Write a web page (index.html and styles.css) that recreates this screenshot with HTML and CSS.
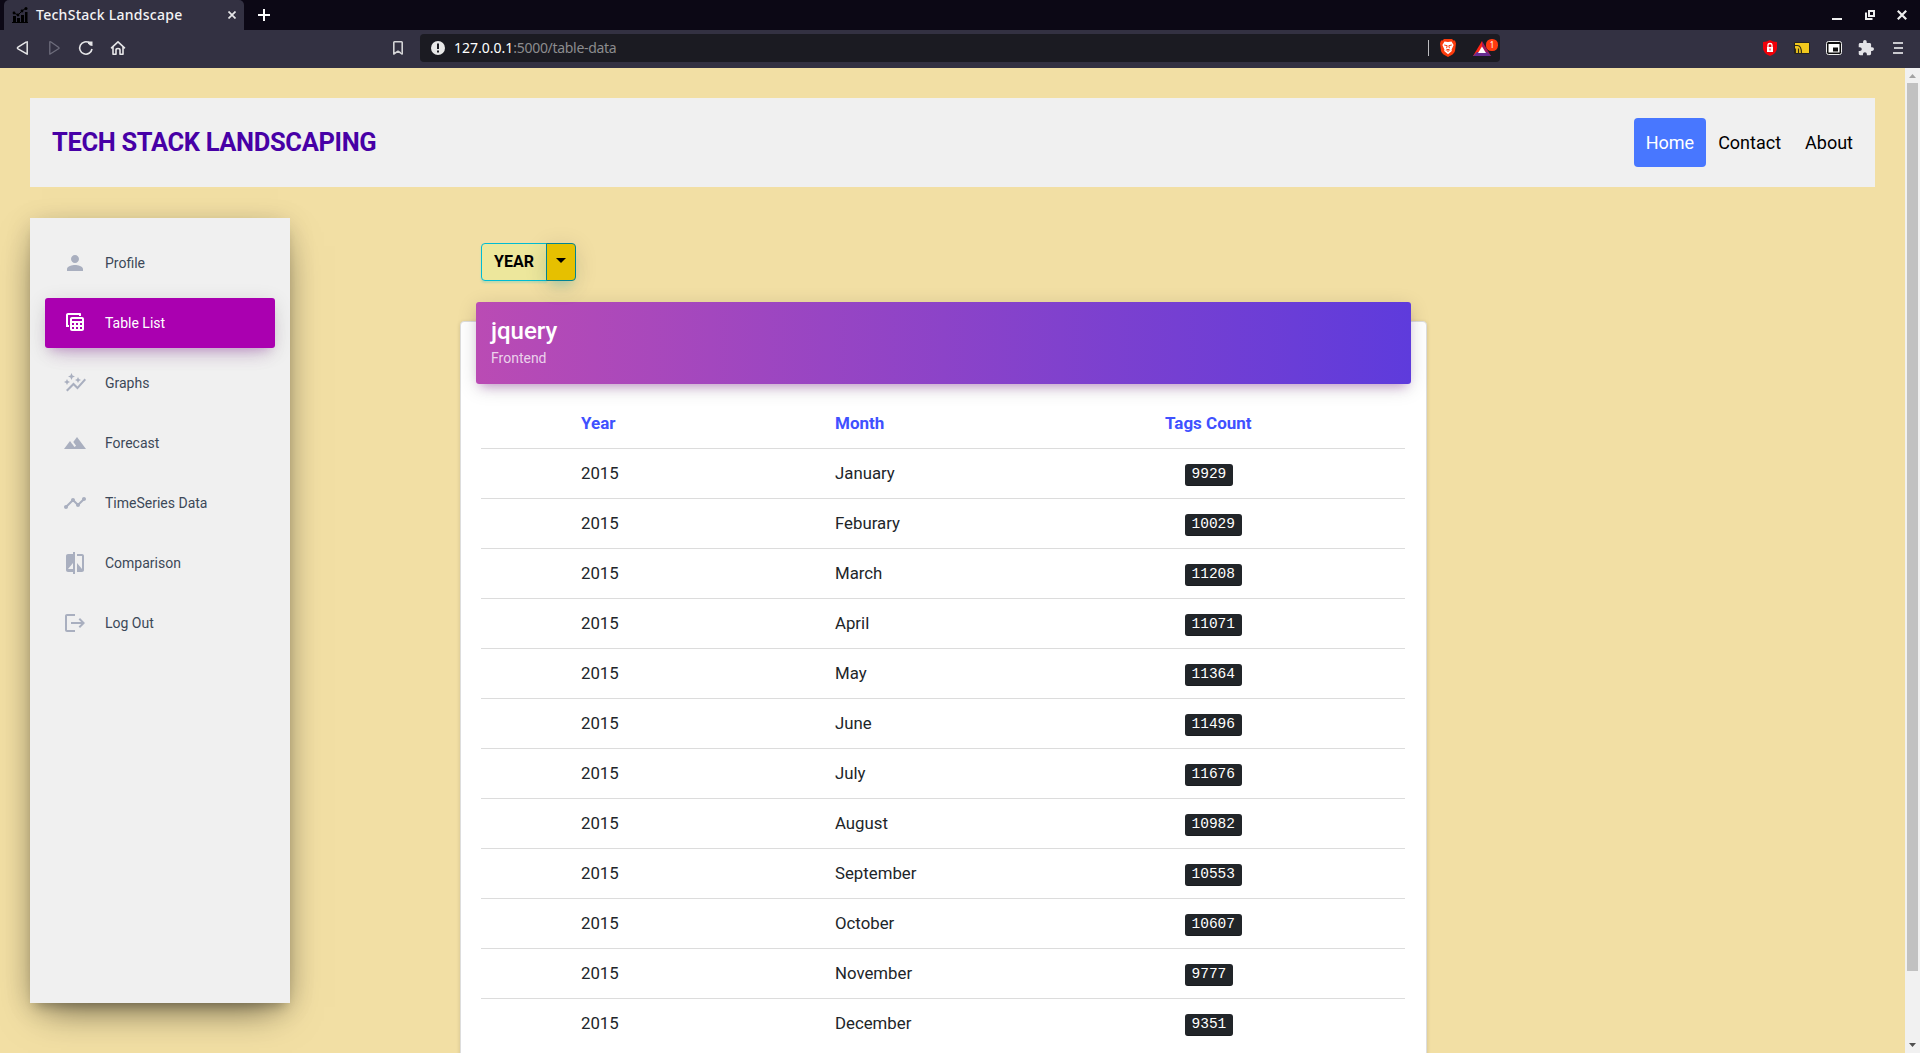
FILE: index.html
```html
<!DOCTYPE html>
<html lang="en">
<head>
<meta charset="utf-8">
<title>TechStack Landscape</title>
<link rel="stylesheet" href="styles.css">
</head>
<body>
<div class="tabbar">
  <div class="tab">
    <svg class="favicon" width="16" height="16" viewBox="0 0 16 16"><path d="M0 15h16v1H0zM1 9h3v6H1zM5 11h3v4H5zM9 8h3v7H9zM13 5h2.500v10H13z"/><path d="M2 6l4 2 4-4 4-3" fill="none" stroke="#000" stroke-width="1"/><circle cx="2" cy="6" r="1.400"/><circle cx="6" cy="8" r="1.400"/><circle cx="10" cy="4" r="1.400"/><circle cx="14" cy="1.500" r="1.500"/></svg>
    <span class="tab-title">TechStack Landscape</span>
    <svg class="tab-close" width="8" height="8" viewBox="0 0 8 8"><path d="M.5 .5l7 7M7.500 .5l-7 7" stroke="#e6e6e8" stroke-width="1.700"/></svg>
  </div>
  <svg class="new-tab" width="12" height="12" viewBox="0 0 12 12"><path d="M6 0v12M0 6h12" stroke="#fff" stroke-width="2"/></svg>
  <div class="window-buttons">
    <svg width="10" height="10" viewBox="0 0 10 10"><path d="M0 8h10v2H0z" fill="#eee"/></svg>
    <svg width="10" height="10" viewBox="0 0 10 10"><path d="M4 1h5v5H4zM1 2.500v6.500h6.500" fill="none" stroke="#eee" stroke-width="2"/></svg>
    <svg width="10" height="10" viewBox="0 0 10 10"><path d="M.8 .8l8.400 8.400M9.200 .8L.8 9.200" stroke="#eee" stroke-width="2.200"/></svg>
  </div>
</div>
<div class="toolbar">
  <div class="nav-buttons">
    <svg width="16" height="16" viewBox="0 0 16 16"><path d="M13.200 1.800v12.400L4 8.800q-1.200-.8 0-1.600l8-5q1.200-.6 1.200.2z" fill="none" stroke="#e6e6e8" stroke-width="1.500" stroke-linejoin="round"/></svg>
    <svg width="16" height="16" viewBox="0 0 16 16"><path d="M3.800 1.800v12.400L12.500 8.800q1.200-.8 0-1.600L5 2q-1.200-.6-1.200.2z" fill="none" stroke="#6e6d7c" stroke-width="1.300" stroke-linejoin="round"/></svg>
    <svg width="16" height="16" viewBox="0 0 16 16"><path d="M11.600 3A6.200 6.200 0 1 0 14 9" fill="none" stroke="#e6e6e8" stroke-width="1.600"/><path d="M10 1.500h4.500v4.500l-2.500-.6-2-2z" fill="#e6e6e8"/></svg>
    <svg width="16" height="16" viewBox="0 0 16 16"><path d="M1.500 7.800L8 1.800l6.500 6M3 7v7.200h3V10q0-1.500 2-1.500t2 1.500v4.200h3V7" fill="none" stroke="#e6e6e8" stroke-width="1.600" stroke-linejoin="round" stroke-linecap="round"/></svg>
  </div>
  <svg class="bookmark" width="10" height="14" viewBox="0 0 10 14"><path d="M.8 1.500q0-.7.7-.7h7q.7 0 .7.700V13L5 10.200.8 13z" fill="none" stroke="#d4d4d6" stroke-width="1.600" stroke-linejoin="round"/></svg>
  <div class="address">
    <svg width="14" height="14" viewBox="0 0 14 14"><circle cx="7" cy="7" r="7" fill="#e8e8e8"/><path d="M6 2.500h2v5.500H6zM6 9.500h2v2H6z" fill="#1b1b22"/></svg>
    <span class="url"><span class="host">127.0.0.1</span><span class="path">:5000/table-data</span></span>
    <span class="address-divider"></span>
    <svg class="brave" width="16" height="18" viewBox="0 0 16 18"><path d="M4 0h8l1.500 1.500L15 1.500 16 4.500l-1 7.500q-.5 2-2.500 3.400L8 18l-4.500-2.600Q1.500 14 1 12L0 4.500 1 1.500h1.500z" fill="#fb3b0c"/><path d="M4.500 2.600L8 3l3.500-.4L13.600 6l-2 4.500.2 1.500L8 15.300 4.200 12l.2-1.500L2.400 6z" fill="#fff"/><path d="M4.200 6l3 .7-.6 2.500M11.800 6l-3 .7.6 2.500M5.800 11.300L8 10.300l2.200 1M8 10.500v2.500" fill="none" stroke="#fb3b0c"/></svg>
    <svg class="bat" width="25" height="18" viewBox="0 0 25 18"><path d="M9 2L0 17h6l3-6z" fill="#ff2414"/><path d="M9 2l9 15h-5L9 10z" fill="#a3195b"/><path d="M0 17h18l-4-4H4z" fill="#662d91"/><path d="M9 7.500L5 14h8z" fill="#fff"/><rect x="13" width="12" height="12" rx="5.500" fill="#ff3a10"/><text class="badge-count" x="19" y="9" text-anchor="middle">1</text></svg>
  </div>
  <div class="extensions">
    <svg width="16" height="16" viewBox="0 0 16 16"><path d="M8 0q3 2 7 2v6q0 5-7 8-7-3-7-8V2q4 0 7-2z" fill="#f00008"/><path d="M5 7h6v5H5z" fill="#fff"/><path d="M6 7V5q0-1.500 2-1.500T10 5v2" fill="none" stroke="#fff" stroke-width="1.300"/><path d="M7.500 8.500h1v2h-1z" fill="#f00008"/></svg>
    <svg width="16" height="12" viewBox="0 0 16 12"><path d="M.5 .5h15v11H.5z" fill="#f2c81d" stroke="#232323"/><path d="M.5 3.500h3q4 0 4 8M1.500 6.500v5M4.500 11.500V6.500" fill="none" stroke="#332d18" stroke-width="1.200"/></svg>
    <svg width="16" height="14" viewBox="0 0 16 14"><rect x=".5" y=".5" width="15" height="13" rx="2" fill="#111" stroke="#eee"/><path d="M2.500 3h11v8.500h-11z" fill="#fff"/><path d="M7 6.500h5v4H7z" fill="#111"/></svg>
    <svg width="16" height="16" viewBox="1 1 22 22"><path d="M20.500 11H19V7c0-1.100-.9-2-2-2h-4V3.500a2.500 2.500 0 0 0-5 0V5H4c-1.100 0-2 .9-2 2v3.800h1.500c1.500 0 2.700 1.200 2.700 2.700S5 16.200 3.500 16.200H2V20c0 1.100.9 2 2 2h3.800v-1.500c0-1.500 1.200-2.700 2.700-2.700s2.700 1.200 2.700 2.700V22H17c1.100 0 2-.9 2-2v-4h1.500a2.500 2.500 0 0 0 0-5z" fill="#e4e4e8"/></svg>
    <svg width="16" height="16" viewBox="0 0 16 16"><path d="M3 3h10M4 8h9M3 13h10" stroke="#c9c9ce" stroke-width="2"/></svg>
  </div>
</div>
<div class="viewport">
  <div class="page">
    <header class="site-header">
      <h1>TECH STACK LANDSCAPING</h1>
      <nav class="site-nav"><a class="active">Home</a><a>Contact</a><a>About</a></nav>
    </header>
    <div class="columns">
      <aside class="sidebar">
        <a class="item"><svg viewBox="0 0 24 24"><path d="M12 12c2.210 0 4-1.790 4-4s-1.790-4-4-4-4 1.790-4 4 1.790 4 4 4zm0 2c-2.670 0-8 1.340-8 4v2h16v-2c0-2.660-5.330-4-8-4z"/></svg>Profile</a>
        <a class="item active"><svg viewBox="0 0 24 24"><path fill-rule="evenodd" d="M17 2H5C3.900 2 3 2.900 3 4v12h3v-2H5V4h11v1h2V3c0-.6-.4-1-1-1zM9 6h10c1.100 0 2 .9 2 2v10c0 1.100-.9 2-2 2H9c-1.100 0-2-.9-2-2V8c0-1.100.9-2 2-2zm0 2v2h10V8zm0 4v2h2v-2zm4 0v2h2v-2zm4 0v2h2v-2zm-8 4v2h2v-2zm4 0v2h2v-2zm4 0v2h2v-2z"/></svg>Table List</a>
        <a class="item"><svg viewBox="0 0 24 24"><path d="M14.060 9.940 12 9l2.060-.94L15 6l.94 2.060L18 9l-2.060.94L15 12l-.94-2.060zM4 14l.94-2.060L7 11l-2.060-.94L4 8l-.94 2.060L1 11l2.060.94L4 14zm4.500-5 1.090-2.410L12 5.500 9.590 4.410 8.500 2 7.410 4.410 5 5.500l2.410 1.090L8.500 9zm-4 11.500 6-6.010 4 4L23 8.930l-1.410-1.410-7.090 7.970-4-4L3 19l1.500 1.500z"/></svg>Graphs</a>
        <a class="item"><svg viewBox="0 0 24 24"><path d="M14 6l-3.750 5 2.850 3.800-1.600 1.200C9.810 13.750 7 10 7 10l-6 8h22L14 6z"/></svg>Forecast</a>
        <a class="item"><svg viewBox="0 0 24 24"><path d="M23 8c0 1.100-.9 2-2 2-.18 0-.35-.02-.51-.07l-3.560 3.550c.05.16.07.34.07.520 0 1.100-.9 2-2 2s-2-.9-2-2c0-.18.02-.36.07-.52l-2.550-2.550c-.16.05-.34.07-.52.070s-.36-.02-.52-.07l-4.550 4.560c.05.16.07.33.07.510 0 1.100-.9 2-2 2s-2-.9-2-2 .9-2 2-2c.18 0 .35.02.51.070l4.560-4.550C8.020 9.360 8 9.180 8 9c0-1.100.9-2 2-2s2 .9 2 2c0 .18-.02.36-.07.520l2.550 2.550c.16-.05.34-.07.52-.070s.36.02.52.070l3.550-3.560C19.020 8.350 19 8.180 19 8c0-1.100.9-2 2-2s2 .9 2 2z"/></svg>TimeSeries Data</a>
        <a class="item"><svg viewBox="0 0 24 24"><path d="M10 3H5c-1.100 0-2 .9-2 2v14c0 1.100.9 2 2 2h5v2h2V1h-2v2zm0 15H5l5-6v6zm9-15h-5v2h5v13l-5-6v9h5c1.100 0 2-.9 2-2V5c0-1.100-.9-2-2-2z"/></svg>Comparison</a>
        <a class="item"><svg viewBox="0 0 24 24"><path d="M12 3H4c-1.100 0-2 .9-2 2v14c0 1.100.9 2 2 2h8v-2H4V5h8zM17 7l-1.400 1.400L18.200 11H8v2h10.200l-2.600 2.600L17 17l5-5z"/></svg>Log Out</a>
      </aside>
      <main class="content">
        <div class="year-picker"><button class="year">YEAR</button><button class="toggle"><span class="caret"></span></button></div>
        <section class="card">
          <div class="card-head"><h4>jquery</h4><p>Frontend</p></div>
          <table>
            <thead><tr><th class="c-year">Year</th><th class="c-month">Month</th><th>Tags Count</th></tr></thead>
            <tbody>
              <tr><td>2015</td><td>January</td><td><kbd>9929</kbd></td></tr>
              <tr><td>2015</td><td>Feburary</td><td><kbd>10029</kbd></td></tr>
              <tr><td>2015</td><td>March</td><td><kbd>11208</kbd></td></tr>
              <tr><td>2015</td><td>April</td><td><kbd>11071</kbd></td></tr>
              <tr><td>2015</td><td>May</td><td><kbd>11364</kbd></td></tr>
              <tr><td>2015</td><td>June</td><td><kbd>11496</kbd></td></tr>
              <tr><td>2015</td><td>July</td><td><kbd>11676</kbd></td></tr>
              <tr><td>2015</td><td>August</td><td><kbd>10982</kbd></td></tr>
              <tr><td>2015</td><td>September</td><td><kbd>10553</kbd></td></tr>
              <tr><td>2015</td><td>October</td><td><kbd>10607</kbd></td></tr>
              <tr><td>2015</td><td>November</td><td><kbd>9777</kbd></td></tr>
              <tr><td>2015</td><td>December</td><td><kbd>9351</kbd></td></tr>
            </tbody>
          </table>
        </section>
      </main>
    </div>
  </div>
  <div class="scrollbar">
    <svg width="15" height="15" viewBox="0 0 15 15"><path d="M4 10l3.500-4L11 10z" fill="#a3a3a3"/></svg>
    <div class="track"><div class="thumb"></div></div>
    <svg width="15" height="15" viewBox="0 0 15 15"><path d="M4 5l3.500 4L11 5z" fill="#505050"/></svg>
  </div>
</div>
</body>
</html>
```
FILE: styles.css
```css
* { box-sizing: border-box; }
body {
  margin: 0;
  height: 1053px;
  overflow: hidden;
  display: flex;
  flex-direction: column;
  font-family: Roboto, "Liberation Sans", sans-serif;
  background: #f2dfa4;
}
svg { display: block; flex: none; }

/* Browser window */
.tabbar { height: 30px; flex: none; background: #0c0815; display: flex; align-items: center; padding: 0 13px 0 4px; }
.tab { width: 240px; height: 30px; background: #333142; border-radius: 5px 5px 0 0; display: flex; align-items: center; padding: 0 8px; }
.tab-title { flex: 1; margin-left: 8px; padding-bottom: 1px; font: 500 14px "Noto Sans", sans-serif; letter-spacing: .27px; color: #f4f4f6; white-space: nowrap; }
.new-tab { margin-left: 14px; }
.window-buttons { margin-left: auto; display: flex; gap: 22.500px; }
.toolbar { height: 38px; flex: none; background: #333142; display: flex; align-items: center; padding: 0 14px 2px; }
.nav-buttons { display: flex; gap: 16px; }
.toolbar .bookmark { margin: 0 17px 0 267px; }
.address { width: 1080px; height: 28px; border-radius: 4px; background: #1b1b22; display: flex; align-items: center; padding: 0 2px 0 11px; }
.url { flex: 1; margin-left: 9px; padding-bottom: 1px; font: 14px "Noto Sans", sans-serif; color: #8c8c8e; }
.host { color: #fff; }
.path { letter-spacing: -.3px; }
.address-divider { width: 1px; height: 16px; background: #bdbdc0; margin-right: 11px; }
.bat { margin-left: 17px; }
.badge-count { font: 8px "Noto Sans", sans-serif; fill: #fff; }
.extensions { margin-left: auto; display: flex; align-items: center; gap: 16px; }

/* Page */
.viewport { flex: 1; min-height: 0; display: flex; }
.page { flex: 1; padding: 30px; overflow: hidden; }
.site-header { height: 89px; background: #f0f0f0; display: flex; align-items: center; justify-content: space-between; padding: 0 10px 0 22px; }
h1 { margin: 0; padding-bottom: 2px; font-size: 25.500px; letter-spacing: -.35px; font-weight: 700; color: #4700a6; }
.site-nav { display: flex; }
.site-nav a { height: 49px; line-height: 49px; padding: 0 12px; border-radius: 4px; font-size: 18px; color: #000; }
.site-nav .active { background: #4877ff; color: #fff; }
.columns { display: flex; align-items: flex-start; margin-top: 31px; }

.sidebar {
  width: 260px;
  height: 785px;
  flex: none;
  background: #f0f0f0;
  padding: 20px 15px;
  display: flex;
  flex-direction: column;
  gap: 10px;
  box-shadow: 0 16px 38px -12px rgba(0, 0, 0, .56), 0 4px 25px 0 rgba(0, 0, 0, .12), 0 8px 10px -5px rgba(0, 0, 0, .2);
}
.item { height: 50px; display: flex; align-items: center; padding-left: 18px; gap: 18px; border-radius: 3px; font-size: 14px; color: #3c4858; }
.item svg { width: 24px; height: 24px; fill: #a9afbf; }
.item.active { color: #fff; background: #aa00b0; box-shadow: 0 12px 20px -10px rgba(156, 39, 176, .28), 0 4px 20px 0 rgba(0, 0, 0, .12), 0 7px 8px -5px rgba(156, 39, 176, .2); }
.item.active svg { fill: #fff; }

.content { width: 967px; margin-left: 170px; padding-top: 25px; }
.year-picker { display: flex; height: 38px; margin-left: 21px; }
.year-picker button { font-family: Roboto, sans-serif; cursor: pointer; }
.year { width: 66px; padding: 0 0 2px; margin-right: -1px; border: 1px solid #00bcd4; border-radius: 4px 0 0 4px; background: #ede79c; font-size: 16px; font-weight: 700; color: #000; box-shadow: 0 2px 2px rgba(0, 188, 212, .2); }
.toggle { width: 30px; padding: 0; display: flex; align-items: center; justify-content: center; border: 1px solid #008394; border-radius: 0 4px 4px 0; background: #e6c000; box-shadow: 0 14px 26px -12px rgba(0, 188, 212, .42), 0 4px 23px 0 rgba(0, 0, 0, .12), 0 8px 10px -5px rgba(0, 188, 212, .2); }
.caret { margin-top: -3px; border: 5px solid transparent; border-top: 5px solid #000; border-bottom: 0; }

.card { margin-top: 40px; height: 800px; background: #fff; border: 1px solid #ddd; border-radius: 4px; padding: 0 15px 0 15px; box-shadow: 0 1px 4px rgba(0, 0, 0, .14); }
.card-head { height: 82px; margin-top: -20px; padding: 16px 15px 14px; border-radius: 3px; background: linear-gradient(90deg, #ba4bb4, #5e3bdc); color: #fff; box-shadow: 0 4px 20px 0 rgba(0, 0, 0, .14), 0 7px 10px -5px rgba(156, 39, 176, .4); }
h4 { margin: 0 0 3px; font-size: 24px; line-height: 27px; font-weight: 500; }
.card-head p { margin: 0; font-size: 14px; line-height: 21px; color: rgba(255, 255, 255, .75); }
table { width: 924px; margin: 14px 0 0 5px; table-layout: fixed; border-collapse: collapse; font-size: 17px; color: #212529; }
th, td { height: 50px; padding: 0; text-align: left; vertical-align: middle; border-top: 1px solid #dcdcdc; }
td { font-size: 16.800px; }
th { border: 0; font-weight: 700; color: #3f51ff; }
th:first-child, td:first-child { padding-left: 100px; }
.c-year { width: 354px; }
.c-month { width: 330px; }
td:last-child { padding-left: 20px; }
kbd { display: block; width: max-content; height: 22px; line-height: 21px; margin-top: 4px; padding: 0 6.500px; border-radius: 3px; background: #212529; color: #fff; font-family: "Liberation Mono", monospace; font-size: 14.500px; box-shadow: inset 0 -1px 0 rgba(0, 0, 0, .25); }

.scrollbar { width: 15px; flex: none; background: #f1f1f1; display: flex; flex-direction: column; }
.track { flex: 1; padding: 0 2px; }
.thumb { height: 888px; background: #c1c1c1; }
```
